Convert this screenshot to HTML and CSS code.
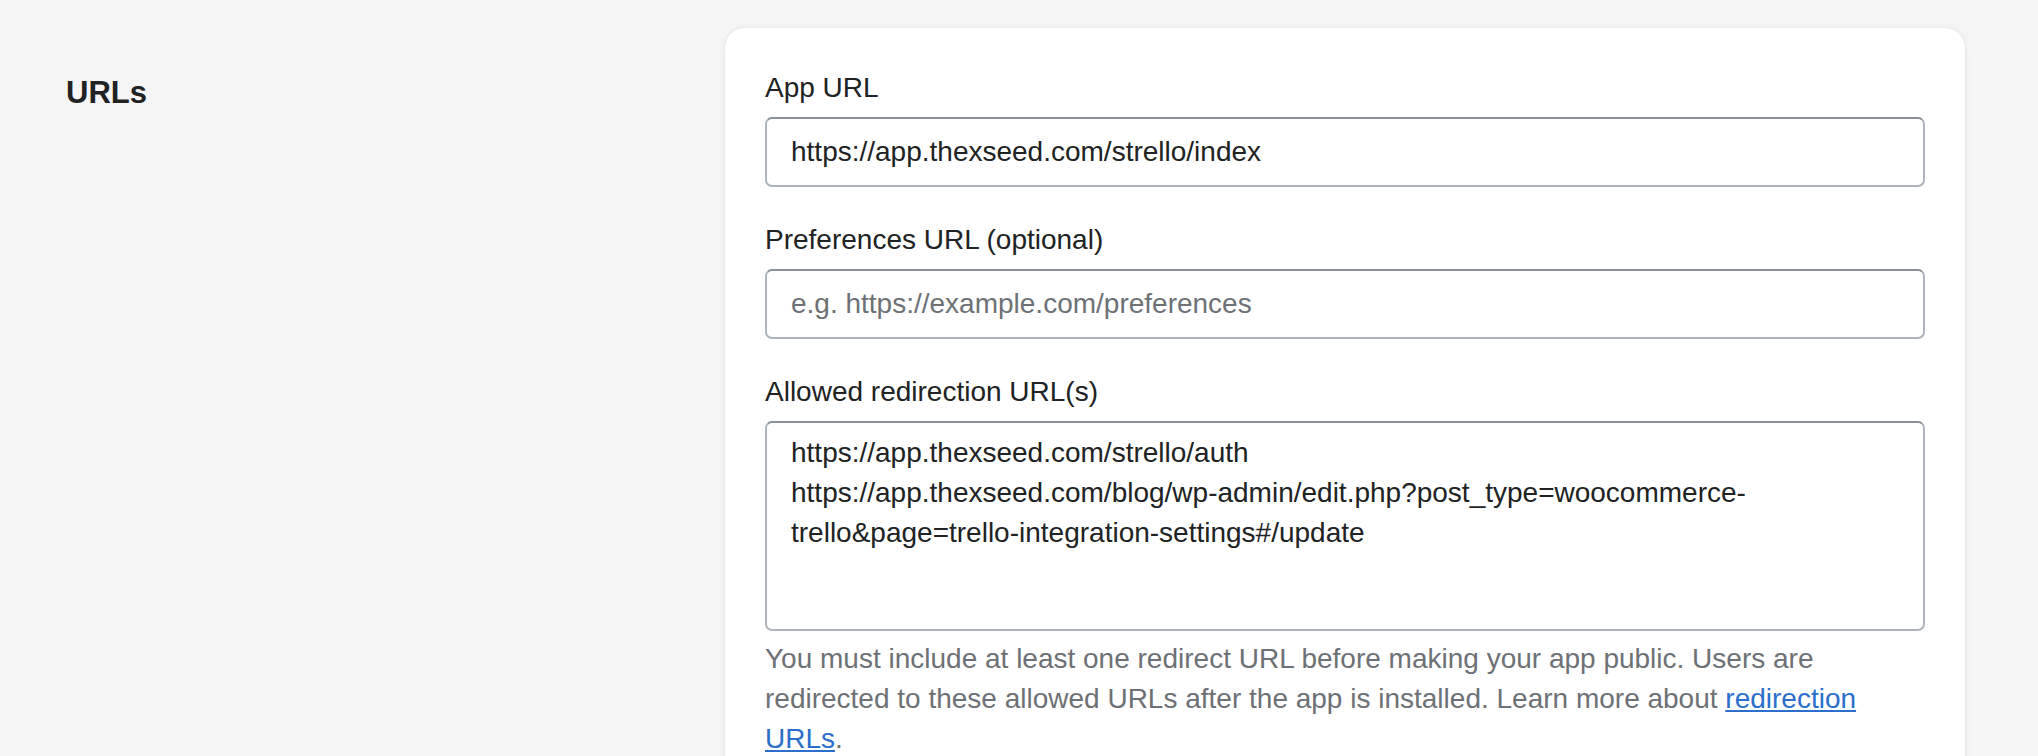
FILE: index.html
```html
<!DOCTYPE html>
<html lang="en">
<head>
<meta charset="utf-8">
<title>URLs</title>
<link rel="stylesheet" href="styles.css">
</head>
<body>
<div class="page">
  <section class="annotated">
    <div class="annotation">
      <h2 class="annotation-title">URLs</h2>
    </div>
    <div class="card">
      <div class="field">
        <label class="label" for="app-url">App URL</label>
        <input class="input" id="app-url" type="text" value="https://app.thexseed.com/strello/index">
      </div>
      <div class="field">
        <label class="label" for="pref-url">Preferences URL (optional)</label>
        <input class="input" id="pref-url" type="text" placeholder="e.g. https://example.com/preferences">
      </div>
      <div class="field">
        <label class="label" for="redirect-urls">Allowed redirection URL(s)</label>
        <textarea class="input textarea" id="redirect-urls">https://app.thexseed.com/strello/auth
https://app.thexseed.com/blog/wp-admin/edit.php?post_type=woocommerce-trello&amp;page=trello-integration-settings#/update</textarea>
        <p class="help">You must include at least one redirect URL before making your app public. Users are redirected to these allowed URLs after the app is installed. Learn more about <a class="link" href="#">redirection URLs</a>.</p>
      </div>
    </div>
  </section>
</div>
</body>
</html>
```
FILE: styles.css
```css
* {
  box-sizing: border-box;
}

html, body {
  margin: 0;
  padding: 0;
  background: #f5f5f5;
}

body {
  font-family: "Liberation Sans", Arial, sans-serif;
  color: #202223;
  font-size: 28px;
  line-height: 40px;
}

.page {
  padding: 28px 73px 0 66px;
}

.annotated {
  display: flex;
  align-items: flex-start;
}

.annotation {
  flex: 1 1 auto;
  padding-top: 45px;
}

.annotation-title {
  margin: 0;
  font-size: 31px;
  line-height: 40px;
  font-weight: 700;
  color: #202223;
}

.card {
  flex: 0 0 1240px;
  width: 1240px;
  background: #ffffff;
  border-radius: 20px;
  padding: 40px 40px 40px 40px;
  box-shadow: 0 0 6px rgba(23, 24, 24, 0.06), 0 1px 3px rgba(0, 0, 0, 0.08);
  display: flex;
  flex-direction: column;
  gap: 33px;
}

.field {
  display: flex;
  flex-direction: column;
}

.label {
  display: block;
  font-size: 28px;
  line-height: 40px;
  color: #202223;
  margin-bottom: 9px;
}

.input {
  display: block;
  width: 100%;
  height: 70px;
  margin: 0;
  padding: 13px 24px;
  font-family: "Liberation Sans", Arial, sans-serif;
  font-size: 28px;
  line-height: 40px;
  color: #202223;
  background: #ffffff;
  border: 2px solid #aeb4b9;
  border-top-color: #898f94;
  border-radius: 7px;
  outline: none;
}

.input::placeholder {
  color: #6d7175;
  opacity: 1;
}

.textarea {
  height: 210px;
  padding: 10px 24px 4px 24px;
  resize: none;
  overflow: hidden;
  white-space: pre-wrap;
}

.help {
  margin: 8px 0 0 0;
  font-size: 28px;
  line-height: 40px;
  color: #6d7175;
}

.link {
  color: #2c6ecb;
  text-decoration: underline;
}
```
